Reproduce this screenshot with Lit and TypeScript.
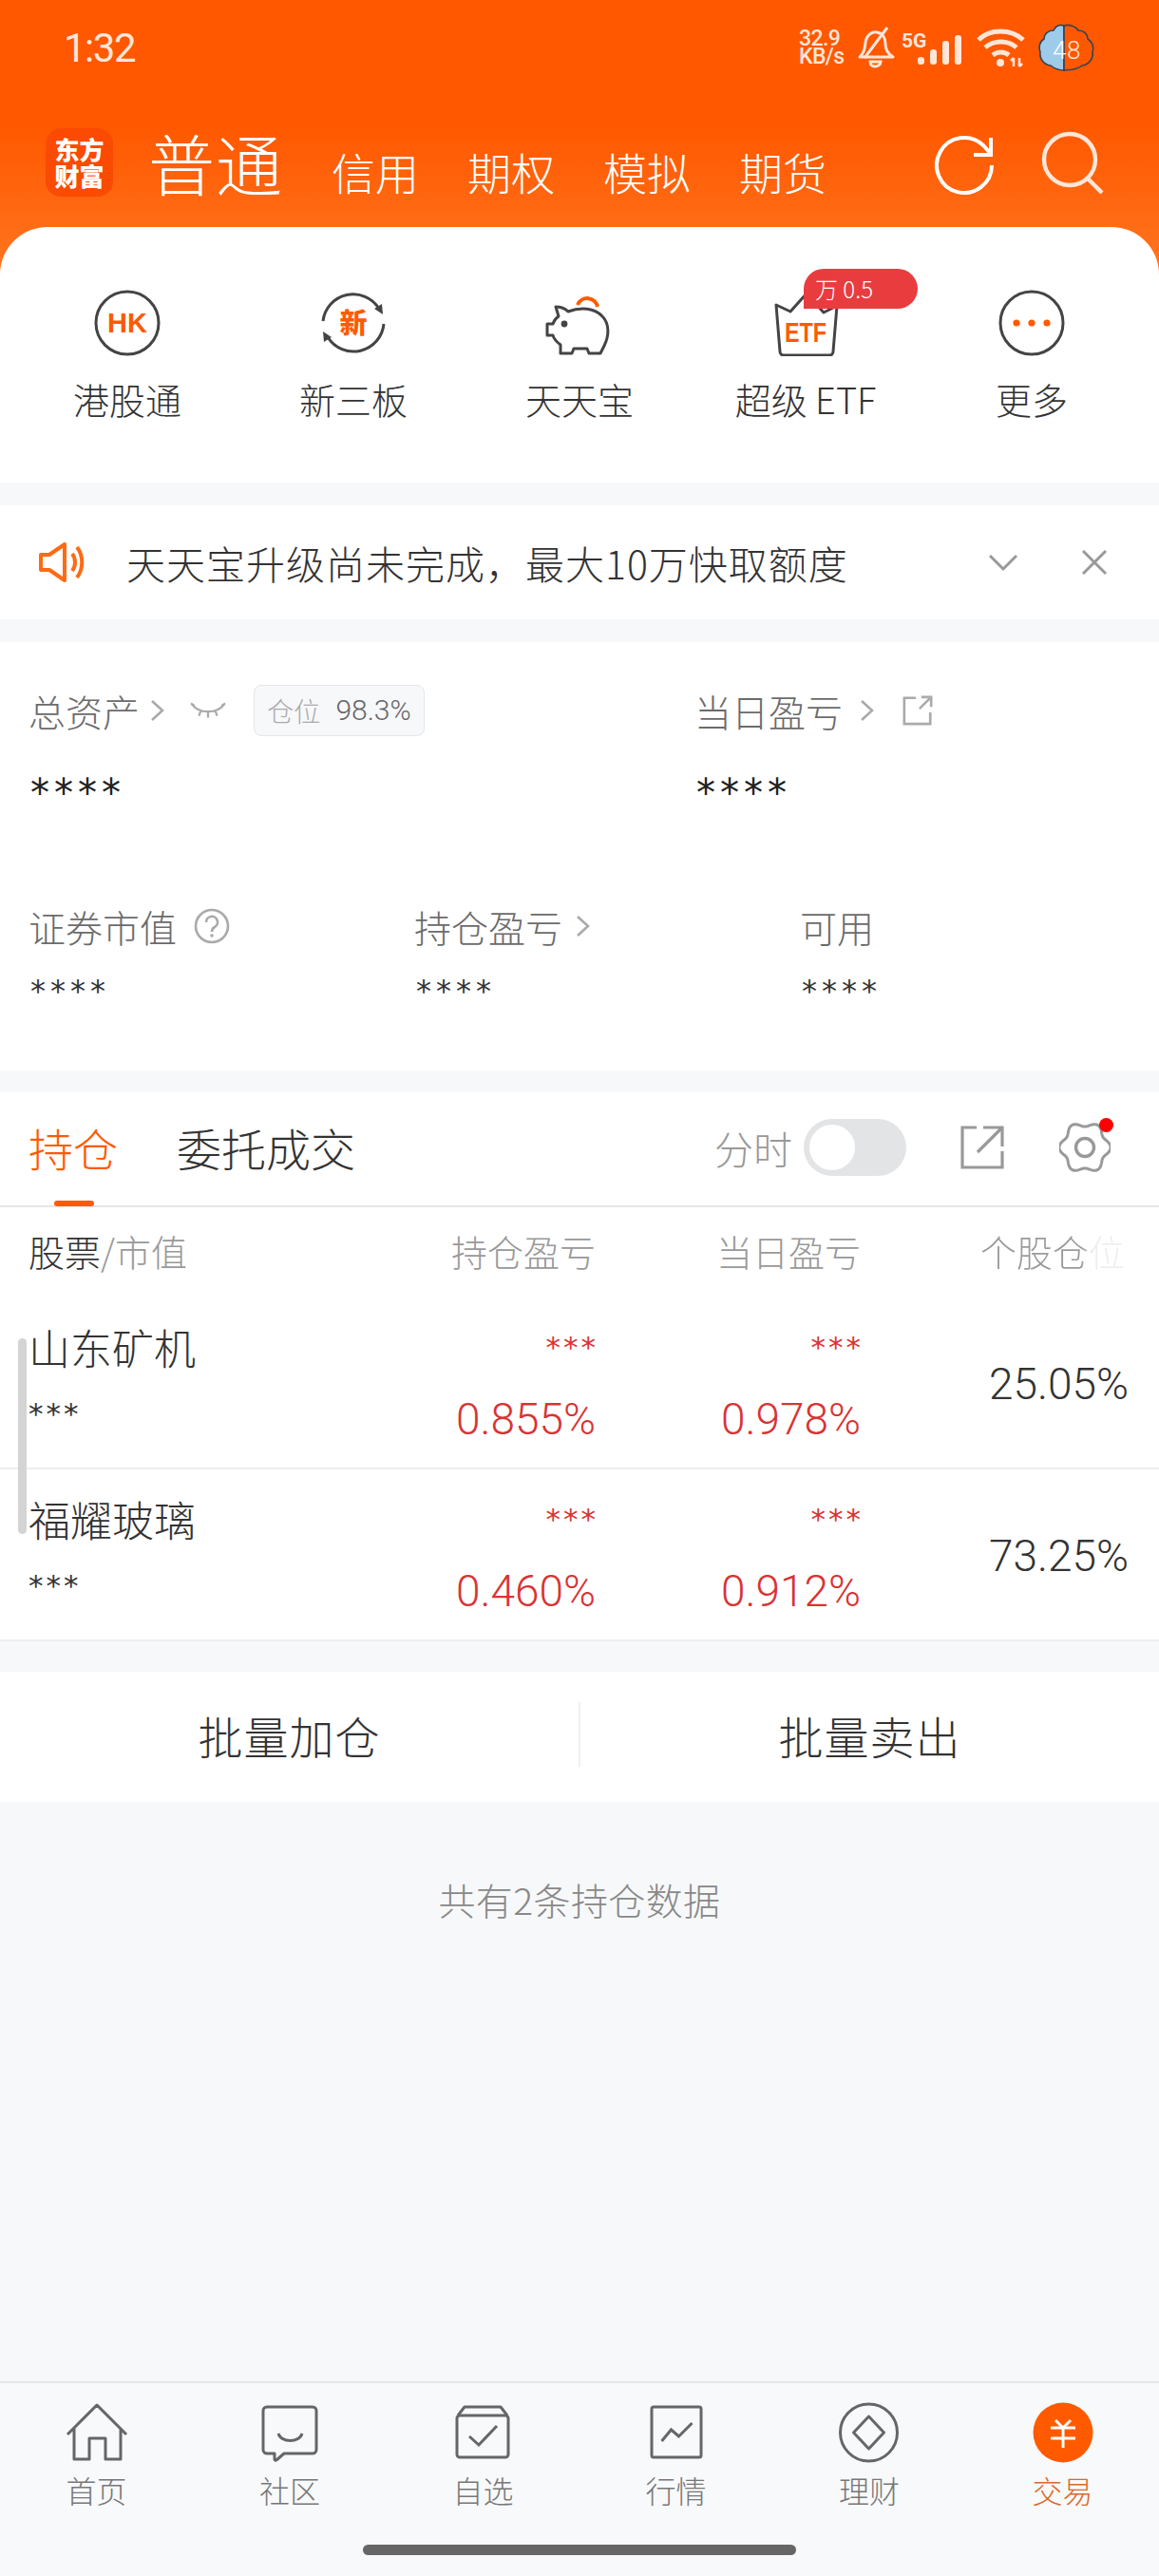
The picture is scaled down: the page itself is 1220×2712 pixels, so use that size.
import { LitElement, html, css, svg } from "lit";
import { customElement } from "lit/decorators.js";

const ic = (w: number, h: number, vb: string, body: unknown) =>
  html`<svg width=${w} height=${h} viewBox=${vb} fill="none">${body}</svg>`;

const quick = [
  { label: "港股通", icon: ic(70, 70, "0 0 70 70", svg`<circle cx="35" cy="35" r="33" stroke="#444" stroke-width="3"/><text x="35" y="45" text-anchor="middle" font-size="29" font-weight="700" font-family="Liberation Sans" fill="#ff5a00">HK</text>`) },
  { label: "新三板", icon: ic(70, 70, "0 0 70 70", svg`<path d="M3 33A32 32 0 0 1 62 20M67 36A32 32 0 0 1 8 50" stroke="#444" stroke-width="3"/><path d="M66 26l-9-6 8-5zM3 44l9 6-8 5z" fill="#444"/><text x="35" y="46" text-anchor="middle" font-size="29" font-weight="900" font-family="Noto Sans CJK SC" fill="#ff5a00">新</text>`) },
  { label: "天天宝", icon: ic(72, 72, "0 0 72 72", svg`<path d="M11 19c5 0 10 2 13 5 13-5 28-4 36 5 8 8 7 21 2 31l-4 8H46l-2-5H30l-2 5H16v-9c-4-3-7-6-8-10H2V37h6c1-3 3-6 6-8z" stroke="#444" stroke-width="3" stroke-linejoin="round"/><circle cx="20" cy="37" r="3.4" fill="#444"/><path d="M34 17a11 11 0 0 1 21 2" stroke="#ff5a00" stroke-width="4"/>`) },
  { label: "超级 ETF", icon: ic(70, 70, "0 0 70 70", svg`<path d="M4 16l15 7 17-19 18 20 14-7-4 48a4 4 0 0 1-4 4H12a4 4 0 0 1-4-4z" stroke="#444" stroke-width="3" stroke-linejoin="round"/><text x="35" y="55" text-anchor="middle" font-size="29" font-weight="700" font-family="Liberation Sans" textLength="44" lengthAdjust="spacingAndGlyphs" fill="#ff5a00">ETF</text>`), badge: "万 0.5" },
  { label: "更多", icon: ic(70, 70, "0 0 70 70", svg`<circle cx="35" cy="35" r="33" stroke="#444" stroke-width="3"/><circle cx="19" cy="35" r="3.6" fill="#ff5a00"/><circle cx="35" cy="35" r="3.6" fill="#ff5a00"/><circle cx="51" cy="35" r="3.6" fill="#ff5a00"/>`) },
];

const nav = [
  { label: "首页", icon: svg`<path d="M2 34L33 3l31 31M9 27v33h16V38h17v22h16V27" stroke="#666" stroke-width="3" stroke-linejoin="round"/>` },
  { label: "社区", icon: svg`<path d="M9 5h48a4 4 0 0 1 4 4v41a4 4 0 0 1-4 4H27l-8 7c-1 .5-2 0-2-1v-6H9a4 4 0 0 1-4-4V9a4 4 0 0 1 4-4z" stroke="#666" stroke-width="3" stroke-linejoin="round"/><path d="M21 33c3 10 22 10 25 0" stroke="#666" stroke-width="3"/>` },
  { label: "自选", icon: svg`<rect x="5" y="14" width="54" height="44" rx="3" stroke="#666" stroke-width="3"/><path d="M6 14l7-9h38l7 9" stroke="#666" stroke-width="3" stroke-linejoin="round"/><path d="M18 36l10 9 19-20" stroke="#666" stroke-width="3"/>` },
  { label: "行情", icon: svg`<rect x="7" y="5" width="52" height="53" rx="2" stroke="#666" stroke-width="3"/><path d="M17.5 41l10-12 8 7 14-14" stroke="#666" stroke-width="3"/>` },
  { label: "理财", icon: svg`<circle cx="32.5" cy="32" r="30" stroke="#666" stroke-width="3"/><path d="M32.5 15l16 17-16 17-16-17z" stroke="#666" stroke-width="3" stroke-linejoin="round"/>` },
  { label: "交易", active: true, icon: svg`<circle cx="33" cy="32" r="31.5" fill="#ff5a00"/><path d="M25 19l8 8 8-8M20 27h26M20 38h26M33 27v21" stroke="#fff" stroke-width="3"/>` },
];

const rows = [
  { name: "山东矿机", a: "0.855%", b: "0.978%", c: "25.05%" },
  { name: "福耀玻璃", a: "0.460%", b: "0.912%", c: "73.25%" },
];

const gearPath = () => {
  const pts: string[] = [];
  for (let i = 0; i < 120; i++) {
    const t = (i / 120) * Math.PI * 2;
    const r = 24.5 + 2.6 * Math.cos(6 * t);
    pts.push(`${(27 + r * Math.cos(t)).toFixed(2)} ${(27 + r * Math.sin(t)).toFixed(2)}`);
  }
  return `M${pts.join("L")}Z`;
};

const chev = (cls = "chev") => html`<svg class=${cls} width="16" height="24" viewBox="0 0 16 24" fill="none"><path d="M2 2l11 10L2 22" stroke="#aaa" stroke-width="2.6"/></svg>`;

@customElement("app-root")
export class AppRoot extends LitElement {
  static styles = css`
    :host { display: block; width: 1220px; height: 2712px; background: #f7f8fa; position: relative; overflow: hidden; }
    .page { display: flex; flex-direction: column; height: 2712px; font-family: "Noto Sans CJK SC", "Noto Sans", sans-serif; font-weight: 300; }
    .head { height: 290px; background: linear-gradient(#ff5800 0, #ff5800 130px, #ff751f 290px); color: #fff; display: flex; flex-direction: column; flex: none; }
    .status { height: 100px; padding: 0 66px 0 67px; display: flex; align-items: center; justify-content: space-between; font-family: Roboto, sans-serif; color: #ffe6d8; }
    .time { font-size: 42px; font-weight: 400; letter-spacing: -1.5px; }
    .sicons { display: flex; align-items: center; }
    .speed { font-size: 23px; line-height: 19px; font-weight: 500; width: 52px; white-space: nowrap; letter-spacing: -.6px; }
    .titles { display: flex; align-items: flex-end; height: 115px; padding-left: 48px; }
    .logo { width: 71px; height: 72px; border-radius: 16px; background: #fb4b03; color: #fff; font-size: 26px; line-height: 28px; font-weight: 900; text-align: center; display: flex; align-items: center; justify-content: center; margin-bottom: 8px; flex: none; }
    .big { font-size: 70px; line-height: 84px; margin-left: 37px; margin-right: 51px; letter-spacing: 1px; margin-bottom: 2px; font-weight: 300; }
    .tab { font-size: 46px; line-height: 60px; margin-right: 51px; margin-bottom: 5px; }
    .ticons { margin-left: auto; display: flex; gap: 48px; align-items: center; padding-right: 58px; margin-bottom: 7px; }
    .quick { margin-top: -51px; height: 269px; background: #fff; border-radius: 50px 50px 0 0; display: grid; grid-template-columns: repeat(5, 238px); flex: none; box-sizing: border-box; padding: 66px 15px 0; position: relative; }
    .q { display: flex; flex-direction: column; align-items: center; position: relative; }
    .q .ic { height: 70px; display: flex; align-items: center; justify-content: center; position: relative; }
    .q span.l { font-size: 38px; line-height: 48px; color: #333; margin-top: 21px; white-space: nowrap; }
    .badge { position: absolute; left: 33px; top: -22px; width: 120px; height: 42px; box-sizing: border-box; background: #e93c3f; color: #fff; font-size: 24px; line-height: 42px; padding-left: 12px; border-radius: 21px 21px 21px 0; white-space: nowrap; }
    .notice { margin-top: 24px; height: 120px; background: #fff; display: flex; align-items: center; padding: 0 53px 0 41px; flex: none; }
    .notice .t { font-size: 41px; color: #333; margin-left: 44px; flex: 1; letter-spacing: 1px; }
    .notice .x { display: flex; gap: 65px; align-items: center; }
    .assets { margin-top: 24px; height: 451px; background: #fff; flex: none; box-sizing: border-box; padding: 44px 30px 0; display: flex; flex-direction: column; color: #666; }
    .r1 { display: grid; grid-template-columns: 701px 1fr; }
    .lab { font-size: 39px; line-height: 56px; display: flex; align-items: center; color: #6b6b6b; white-space: nowrap; }
    .lab .chev { margin-left: 11px; }
    .lab .chev.w { margin-left: 18px; }
    .lab .chev.m { margin-left: 14px; }
    .eye { margin: 0 29px 0 26px; }
    .pos { border: 1px solid #e5e6ea; background: #f7f8fa; border-radius: 8px; height: 54px; width: 180px; box-sizing: border-box; font-size: 28px; display: flex; align-items: center; justify-content: center; gap: 16px; color: #aaa; }
    .pos b { font-weight: 300; color: #666; font-family: Roboto, sans-serif; font-size: 30px; }
    .stars { font-family: "DejaVu Sans", sans-serif; font-weight: 400; color: #222; font-size: 40px; line-height: 40px; letter-spacing: 5px; margin: 39px 0 0 2px; height: 40px; }
    .r2 { display: grid; grid-template-columns: 406px 406px 1fr; margin-top: 92px; }
    .stars.s { font-size: 32px; letter-spacing: 5px; margin-top: 20px; color: #333; }
    .holdings { margin-top: 23px; background: #fff; flex: none; }
    .tabs { height: 121px; border-bottom: 2px solid #e6e6e6; box-sizing: border-box; display: flex; align-items: center; padding: 0 51px 4px 30px; position: relative; }
    .tabs .on { font-size: 47px; color: #ff5a00; position: relative; }
    .tabs .on::after { content: ""; position: absolute; left: 27px; bottom: -28px; width: 42px; height: 6px; background: #ff5a00; border-radius: 3px; }
    .tabs .off { font-size: 47px; color: #333; margin-left: 62px; }
    .tr { margin-left: auto; display: flex; align-items: center; }
    .tr .fs { font-size: 41px; color: #999; margin-right: 12px; }
    .sw { width: 108px; height: 60px; border-radius: 30px; background: #e3e4e6; position: relative; margin-right: 57px; }
    .sw i { position: absolute; left: 6px; top: 6px; width: 48px; height: 48px; border-radius: 50%; background: #fff; }
    .gear { position: relative; margin-left: 58px; display: flex; }
    .gear::after { content: ""; position: absolute; right: -3px; top: -4px; width: 15px; height: 15px; border-radius: 50%; background: #f00; }
    .cols { display: grid; grid-template-columns: 309px 288px 279px 1fr; height: 95px; align-items: center; padding: 0 32px 4px 30px; box-sizing: border-box; font-size: 38px; color: #999; text-align: right; position: relative; }
    .cols > span:first-child { text-align: left; color: #333; }
    .cols em { font-style: normal; color: #999; }
    .fade { background: linear-gradient(90deg, #999 70%, #eee 78%); -webkit-background-clip: text; background-clip: text; color: transparent; margin-right: 4px; display: inline-block; }
    .row { display: grid; grid-template-columns: 309px 288px 279px 1fr; height: 181px; padding: 0 32px 0 30px; border-bottom: 2px solid #eee; box-sizing: border-box; align-items: center; position: relative; }
    .info { margin-bottom: 22px; }
    .nm { font-size: 44px; line-height: 60px; color: #333; }
    .st3 { font-family: "DejaVu Sans", sans-serif; font-weight: 400; font-size: 31px; line-height: 28px; letter-spacing: 3px; color: #333; margin-top: 26px; }
    .vals { text-align: right; color: #d83434; font-family: Roboto, sans-serif; font-size: 46px; line-height: 50px; font-weight: 300; margin-top: 12px; }
    .vals .sr { font-family: "DejaVu Sans", sans-serif; font-weight: 400; font-size: 31px; line-height: 28px; letter-spacing: 3px; margin-bottom: 37px; margin-right: -3px; }
    .pct { text-align: right; font-family: Roboto, sans-serif; font-size: 46px; color: #333; font-weight: 300; margin-top: 2px; }
    .scroll { position: absolute; left: 19px; top: 1409px; width: 9px; height: 206px; background: #d4d4d4; border-radius: 5px; z-index: 3; }
    .batch { margin-top: 32px; height: 137px; box-sizing: border-box; padding-bottom: 5px; background: #fff; display: flex; align-items: center; flex: none; font-size: 47px; color: #333; }
    .batch div { flex: 1; text-align: center; letter-spacing: 1px; }
    .batch .sep { flex: none; width: 2px; height: 68px; background: #f0f0f0; }
    .cnt { margin-top: 72px; text-align: center; font-size: 39px; color: #888; line-height: 60px; letter-spacing: .4px; }
    .nav { margin-top: auto; height: 205px; border-top: 2px solid #e6e6e6; box-sizing: border-box; background: #f8f9fb; display: grid; grid-template-columns: 203px 204px 203px 203px 204px 203px; position: relative; flex: none; }
    .n { display: flex; flex-direction: column; align-items: center; padding-top: 20px; color: #777; font-size: 32px; line-height: 44px; }
    .n svg { height: 72px; flex: none; }
    .n span { margin-top: -2px; }
    .n.on { color: #d96a2a; }
    .home { position: absolute; left: 382px; bottom: 22px; width: 456px; height: 11px; border-radius: 6px; background: #666; }
  `;

  render() {
    return html`<div class="page">
      <div class="head">
        <div class="status">
          <span class="time">1:32</span>
          <div class="sicons">
            <div class="speed">32.9<br />KB/s</div>
            <svg width="44" height="46" viewBox="0 0 44 46" fill="none" style="margin-left:7px"><path d="M5 33c5-5 5-9 6-15C12 9 19 6 23 7c6 1 9 6 9 12 0 6 3 11 8 14z" stroke="#ffe6d8" stroke-width="3" stroke-linejoin="round"/><path d="M16 38h11c0 3-3 5-6 5s-5-2-5-5zM34 2L10 34" stroke="#ffe6d8" stroke-width="3"/></svg>
            <svg width="68" height="44" viewBox="0 0 68 44" fill="none" style="margin-left:5px"><text x="0" y="22" font-size="21" font-weight="700" font-family="Roboto" fill="#ffe6d8">5G</text><rect x="17" y="32" width="7" height="8" rx="3" fill="#ffe6d8"/><rect x="30" y="24" width="7" height="16" rx="3" fill="#ffe6d8"/><rect x="43" y="15" width="7" height="25" rx="3" fill="#ffe6d8"/><rect x="56" y="9" width="7" height="31" rx="3" fill="#ffe6d8"/></svg>
            <svg width="52" height="44" viewBox="0 0 52 44" fill="none" style="margin-left:11px"><path d="M2 14C14 2 36 2 49 14M9 22c9-8 24-8 33 0M17 30c5-4 12-4 17 0" stroke="#ffe6d8" stroke-width="5"/><circle cx="25" cy="38" r="4" fill="#ffe6d8"/><path d="M39 42v-9m-3 3l3-3M45 33v9m3-3l-3 3" stroke="#ffe6d8" stroke-width="2.5"/></svg>
            <svg width="62" height="54" viewBox="0 0 62 54" style="margin-left:12px"><path d="M28 4c-6-2-9 1-11 5-6 0-10 4-10 9-5 3-6 9-4 14-1 7 4 13 11 14 5 4 9 5 14 5z" fill="#9fcbeb" stroke="#345" stroke-width="1.6"/><path d="M28 4c6-2 12 1 15 5 6 0 10 4 10 9 5 3 7 9 5 14 1 7-4 13-11 14-5 4-13 5-19 5z" fill="#ff5800" stroke="#345" stroke-width="1.6"/><text x="16" y="39" font-size="26" font-family="Roboto" fill="#fff">4</text><text x="31" y="39" font-size="26" font-family="Roboto" fill="#ffe6d8">8</text></svg>
          </div>
        </div>
        <div class="titles">
          <div class="logo"><span>东方<br />财富</span></div>
          <span class="big">普通</span>
          <span class="tab">信用</span><span class="tab">期权</span><span class="tab">模拟</span><span class="tab">期货</span>
          <div class="ticons">
            <svg width="64" height="72" viewBox="0 0 64 72" fill="none"><path d="M60 38a29 29 0 1 1-9-21l8 9M59 9v18H41" stroke="#fff" stroke-width="4"/></svg>
            <svg width="66" height="72" viewBox="0 0 66 72" fill="none"><circle cx="30" cy="32" r="27" stroke="#ffe6d8" stroke-width="4.4"/><path d="M49 52l15 15" stroke="#ffe6d8" stroke-width="4.4"/></svg>
          </div>
        </div>
      </div>

      <div class="quick">
        ${quick.map((q) => html`<div class="q"><div class="ic">${q.icon}${q.badge ? html`<div class="badge">${q.badge}</div>` : ""}</div><span class="l">${q.label}</span></div>`)}
      </div>

      <div class="notice">
        <svg width="48" height="44" viewBox="0 0 48 44" fill="none"><path d="M2 14h9L27 3v38L11 30H2z" stroke="#ff6a13" stroke-width="4" stroke-linejoin="round"/><path d="M35 13c4 5 4 13 0 18M40 6c7 9 7 23 0 32" stroke="#ff6a13" stroke-width="4"/></svg>
        <span class="t">天天宝升级尚未完成，最大10万快取额度</span>
        <div class="x">
          <svg width="32" height="20" viewBox="0 0 32 20" fill="none"><path d="M2 3l14 14L30 3" stroke="#999" stroke-width="3"/></svg>
          <svg width="30" height="30" viewBox="0 0 30 30" fill="none"><path d="M3 3l24 24M27 3L3 27" stroke="#999" stroke-width="3"/></svg>
        </div>
      </div>

      <div class="assets">
        <div class="r1">
          <div>
            <div class="lab">总资产${chev()}
              <svg class="eye" width="38" height="22" viewBox="0 0 40 22" fill="none"><path d="M2 4c8 11 28 11 36 0M1 3l4 3M39 3l-4 3M12 11l-2 6M28 11l2 6M20 13v6" stroke="#aaa" stroke-width="2.4"/></svg>
              <div class="pos">仓位 <b>98.3%</b></div>
            </div>
            <div class="stars">****</div>
          </div>
          <div>
            <div class="lab">当日盈亏${chev("chev w")}
              <svg width="34" height="34" viewBox="0 0 36 36" fill="none" style="margin-left:28px"><path d="M16 4H3v29h29V20M20 16L33 3M22 3h11v11" stroke="#aaa" stroke-width="2.8"/></svg>
            </div>
            <div class="stars">****</div>
          </div>
        </div>
        <div class="r2">
          <div>
            <div class="lab">证券市值
              <svg width="38" height="38" viewBox="0 0 38 38" fill="none" style="margin-left:18px"><circle cx="19" cy="19" r="17" stroke="#aaa" stroke-width="2.6"/><path d="M13 15a6 6 0 1 1 9 5c-2 1-3 2-3 5" stroke="#aaa" stroke-width="2.6"/><circle cx="19" cy="29" r="1.8" fill="#aaa"/></svg>
            </div>
            <div class="stars s">****</div>
          </div>
          <div><div class="lab">持仓盈亏${chev("chev m")}</div><div class="stars s">****</div></div>
          <div><div class="lab">可用</div><div class="stars s">****</div></div>
        </div>
      </div>

      <div class="holdings">
        <div class="tabs">
          <span class="on">持仓</span><span class="off">委托成交</span>
          <div class="tr">
            <span class="fs">分时</span>
            <div class="sw"><i></i></div>
            <svg width="46" height="46" viewBox="0 0 46 46" fill="none"><path d="M17 2H2v42h42V27M18 28L43 3M24 2h20v20" stroke="#999" stroke-width="3.2"/></svg>
            <div class="gear"><svg width="54" height="54" viewBox="0 0 54 54" fill="none"><path d=${gearPath()} stroke="#999" stroke-width="3" stroke-linejoin="round"/><circle cx="27" cy="27" r="9.5" stroke="#999" stroke-width="3.4"/></svg></div>
          </div>
        </div>
        <div class="cols"><span>股票<em>/市值</em></span><span>持仓盈亏</span><span>当日盈亏</span><span><span class="fade">个股仓位</span></span></div>
        ${rows.map((r) => html`<div class="row">
          <div class="info"><div class="nm">${r.name}</div><div class="st3">***</div></div>
          <div class="vals"><div class="sr">***</div>${r.a}</div>
          <div class="vals"><div class="sr">***</div>${r.b}</div>
          <div class="pct">${r.c}</div>
        </div>`)}
      </div>

      <div class="batch"><div>批量加仓</div><span class="sep"></span><div>批量卖出</div></div>
      <div class="cnt">共有2条持仓数据</div>

      <div class="nav">
        ${nav.map((n) => html`<div class="n ${n.active ? "on" : ""}"><svg width="66" height="72" viewBox="0 0 66 72" fill="none">${n.icon}</svg><span>${n.label}</span></div>`)}
        <div class="home"></div>
      </div>
      <div class="scroll"></div>
    </div>`;
  }
}
